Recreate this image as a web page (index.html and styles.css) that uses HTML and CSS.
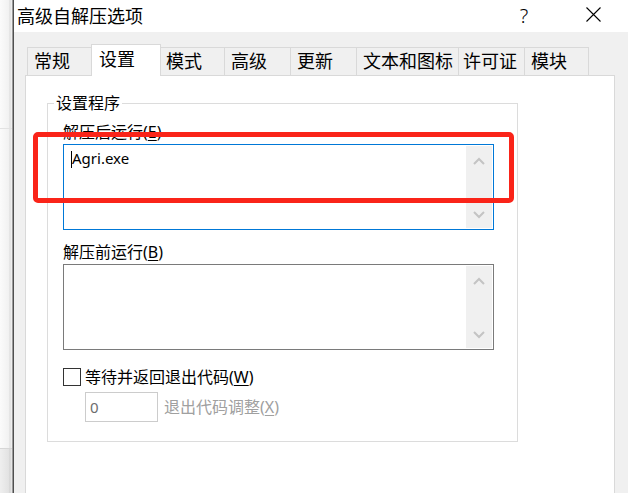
FILE: index.html
```html
<!DOCTYPE html>
<html lang="zh-CN">
<head>
<meta charset="utf-8">
<title>高级自解压选项</title>
<link rel="stylesheet" href="styles.css">
</head>
<body>
<div class="screen">
  <div class="bg-strip">
    <div class="seg seg-a"></div>
    <div class="seg seg-b"></div>
    <div class="seg seg-c"></div>
  </div>
  <div class="win-edge"></div>
  <div class="window">
    <div class="titlebar">
      <span class="title">高级自解压选项</span>
      <span class="help">?</span>
      <span class="close">
        <svg width="15" height="15" viewBox="0 0 15 15"><path d="M0.5 0.5 L14.5 14.5 M14.5 0.5 L0.5 14.5" stroke="#000" stroke-width="1.1" fill="none"/></svg>
      </span>
    </div>
    <div class="client">
      <div class="tabs">
        <div class="tab t1">常规</div>
        <div class="tab t2 active">设置</div>
        <div class="tab t3">模式</div>
        <div class="tab t4">高级</div>
        <div class="tab t5">更新</div>
        <div class="tab t6">文本和图标</div>
        <div class="tab t7">许可证</div>
        <div class="tab t8">模块</div>
      </div>
      <div class="panel">
        <div class="group">
          <div class="group-title">设置程序</div>
          <div class="field-label first">解压后运行(<u>E</u>)</div>
          <div class="memo focus">
            <div class="memo-text"><span class="caret"></span>Agri.exe</div>
            <div class="vscroll">
              <div class="arrow up"><svg width="12" height="8" viewBox="0 0 12 8"><polyline points="1,7 6,2 11,7" fill="none" stroke="#c4c4c4" stroke-width="2"/></svg></div>
              <div class="arrow down"><svg width="12" height="8" viewBox="0 0 12 8"><polyline points="1,1 6,6 11,1" fill="none" stroke="#c4c4c4" stroke-width="2"/></svg></div>
            </div>
          </div>
          <div class="field-label second">解压前运行(<u>B</u>)</div>
          <div class="memo">
            <div class="memo-text"></div>
            <div class="vscroll">
              <div class="arrow up"><svg width="12" height="8" viewBox="0 0 12 8"><polyline points="1,7 6,2 11,7" fill="none" stroke="#c4c4c4" stroke-width="2"/></svg></div>
              <div class="arrow down"><svg width="12" height="8" viewBox="0 0 12 8"><polyline points="1,1 6,6 11,1" fill="none" stroke="#c4c4c4" stroke-width="2"/></svg></div>
            </div>
          </div>
          <div class="check-row">
            <span class="checkbox"></span>
            <span>等待并返回退出代码(<u>W</u>)</span>
          </div>
          <div class="sub-row">
            <div class="num">0</div>
            <span class="sub-label">退出代码调整(<u>X</u>)</span>
          </div>
        </div>
      </div>
    </div>
  </div>
  <div class="highlight"></div>
</div>
</body>
</html>
```

FILE: styles.css
```css
* { box-sizing: border-box; }

html, body {
  margin: 0;
  padding: 0;
}

body {
  width: 628px;
  height: 493px;
  overflow: hidden;
  background: #f0f0f0;
  font-family: "Noto Sans", "Noto Sans CJK SC", sans-serif;
  color: #000;
}

.screen {
  position: relative;
  display: flex;
  height: 493px;
}

.bg-strip {
  width: 12px;
  display: flex;
  flex-direction: column;
}

.seg {
  background: linear-gradient(to right, #fbfbfb 0, #f1f1f1 9px, #dadada 10px, #eeeeee 11px);
}

.seg-a { height: 129px; border-bottom: 1px solid #e2e2e2; }
.seg-b { height: 319px; }
.seg-c {
  flex: 1;
  border-top: 1px solid #d6d6d6;
  background: linear-gradient(to right, #efefef 0, #e2e2e2 9px, #cfcfcf 10px, #e6e6e6 11px);
}

.win-edge {
  width: 2px;
  background: linear-gradient(to right, #9a9a9a 0 1px, #4f4f4f 1px 2px);
}

.window {
  flex: 1;
  display: flex;
  flex-direction: column;
  min-width: 0;
}

.titlebar {
  height: 32px;
  flex: none;
  background: #fff;
  display: flex;
  align-items: center;
  padding-left: 3px;
}

.title {
  font-size: 18px;
  line-height: 24px;
}

.help {
  margin-left: auto;
  width: 20px;
  text-align: center;
  font-size: 20px;
  font-weight: 300;
  line-height: 24px;
  margin-right: 52px;
}

.close {
  display: flex;
  width: 15px;
  height: 15px;
  margin-right: 27px;
  margin-top: -3px;
}

.client {
  flex: 1;
  padding: 12px 0 0 11px;
  min-height: 0;
  display: flex;
  flex-direction: column;
}

.tabs {
  display: flex;
  align-items: flex-end;
  height: 31px;
  flex: none;
  margin-left: 2px;
}

.tab {
  height: 28px;
  border-top: 1px solid #d9d9d9;
  border-left: 1px solid #d9d9d9;
  background: #f0f0f0;
  font-size: 18px;
  line-height: 26px;
  padding-left: 6px;
  white-space: nowrap;
}

.tab.active {
  height: 32px;
  background: #fff;
  border-right: 1px solid #d9d9d9;
  margin-bottom: -1px;
  line-height: 28px;
  padding-left: 7px;
  position: relative;
  z-index: 1;
}

.tab.active + .tab { border-left: none; }

.tab:last-child { border-right: 1px solid #d9d9d9; }

.t1 { width: 64px; padding-left: 6px; }
.t2 { width: 70px; }
.t3 { width: 63px; padding-left: 5px; }
.t4 { width: 66px; }
.t5 { width: 66px; }
.t6 { width: 102px; }
.t7 { width: 66px; padding-left: 4px; }
.t8 { width: 65px; }

.panel {
  flex: 1;
  min-height: 0;
  width: 590px;
  background: #fff;
  border: 1px solid #d9d9d9;
  border-bottom: none;
  padding: 27px 0 0 21px;
}

.group {
  width: 471px;
  height: 339px;
  border: 1px solid #dcdcdc;
  padding: 0 0 0 15px;
  display: flex;
  flex-direction: column;
  align-items: flex-start;
  font-size: 16px;
  line-height: 20px;
}

.group-title {
  margin: -11px 0 0 -9px;
  padding: 0 2px;
  background: #fff;
}

.field-label.first { margin-top: 9px; }
.field-label.second { margin-top: 12px; }

u { text-underline-offset: 2px; }

.memo {
  width: 431px;
  height: 86px;
  margin-top: 2px;
  border: 1px solid #7a7a7a;
  padding: 1px;
  display: flex;
  flex: none;
}

.memo.focus { border-color: #0078d7; }

.memo-text {
  flex: 1;
  padding: 2px 0 0 6px;
  font-size: 15px;
  line-height: 20px;
}

.caret {
  display: inline-block;
  width: 1px;
  height: 17px;
  background: #000;
  vertical-align: -4px;
}

.vscroll {
  width: 26px;
  background: #f0f0f0;
  display: flex;
  flex-direction: column;
  justify-content: space-between;
}

.arrow {
  display: flex;
  align-items: center;
  justify-content: center;
}

.arrow.up { height: 30px; }
.arrow.down { height: 26px; }

.check-row {
  margin-top: 17px;
  height: 20px;
  display: flex;
  align-items: center;
}

.checkbox {
  width: 18px;
  height: 18px;
  border: 1px solid #333;
  background: #fff;
  margin-right: 4px;
}

.sub-row {
  margin-top: 5px;
  margin-left: 22px;
  display: flex;
  align-items: center;
}

.num {
  width: 73px;
  height: 30px;
  border: 1px solid #cccccc;
  padding-left: 4px;
  font-size: 15px;
  color: #6d6d6d;
  display: flex;
  align-items: center;
}

.sub-label {
  margin-left: 6px;
  color: #a0a0a0;
}

.highlight {
  position: absolute;
  left: 33px;
  top: 132px;
  width: 481px;
  height: 71px;
  border: 5px solid #fa2419;
  border-radius: 5px;
}
```
